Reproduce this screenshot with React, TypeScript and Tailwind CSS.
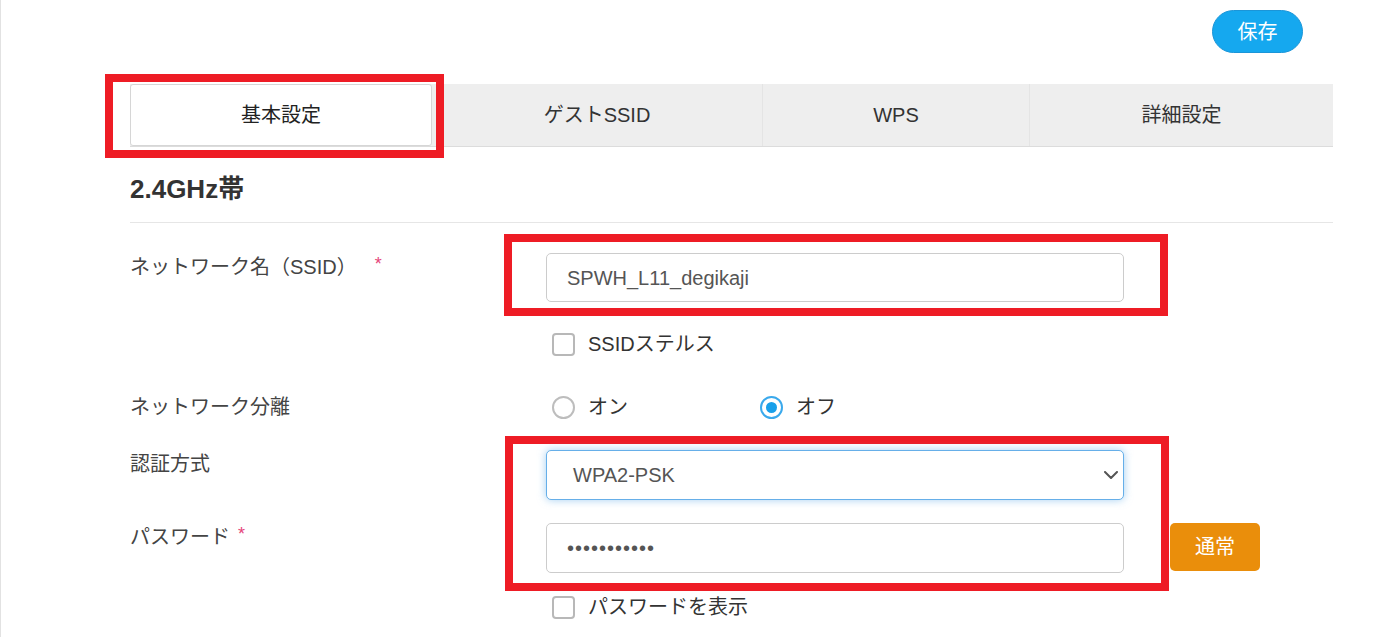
import React from "react";

const font = { fontFamily: '"Liberation Sans", "Noto Sans CJK JP", sans-serif' };

function RedBox({ className }: { className: string }) {
  return <span className={`pointer-events-none absolute border-[8px] border-[#ee1c25] ${className}`} />;
}

function Checkbox({ label }: { label: string }) {
  return (
    <label className="flex h-[24px] items-center pl-[6px]">
      <span className="h-[23px] w-[23px] rounded-[4px] border-2 border-[#b8b8b8] bg-white" />
      <span className="ml-[13px] text-[20px] leading-[24px] text-[#333]">{label}</span>
    </label>
  );
}

function Radio({ label, checked }: { label: string; checked?: boolean }) {
  return (
    <span className="flex w-[208px] items-center">
      <span
        className={`flex h-[23px] w-[23px] items-center justify-center rounded-full border-2 bg-white ${
          checked ? "border-[#3aa9ec]" : "border-[#bdbdbd]"
        }`}
      >
        {checked && <span className="h-[11px] w-[11px] rounded-full bg-[#19a0ea]" />}
      </span>
      <span className="ml-[13px] text-[20px] leading-[24px] text-[#333]">{label}</span>
    </span>
  );
}

function Req() {
  return <span className="relative -top-[4px] text-[18px] text-[#e5457a]">*</span>;
}

export default function App() {
  const tabs = [
    { name: "基本設定", w: "w-[302px]" },
    { name: "ゲストSSID", w: "w-[330px]" },
    { name: "WPS", w: "w-[267px]" },
    { name: "詳細設定", w: "w-[304px]" },
  ];
  return (
    <div style={font} className="h-[637px] w-full overflow-hidden border-l border-[#e2e2e2] bg-white">
      <div className="flex justify-end pr-[70px] pt-[10px]">
        <button className="h-[43px] w-[91px] rounded-full border border-[#1b95d8] bg-[#15a8ef] text-[20px] leading-none text-white">
          保存
        </button>
      </div>

      <div className="ml-[129px] mr-[40px] mt-[31px] flex h-[63px] border-b border-[#dcdcdc] bg-[#eeeeee]">
        {tabs.map((t, i) => (
          <div
            key={t.name}
            className={`relative flex ${t.w} items-center justify-center text-[20px] ${
              i === 0
                ? "rounded-[3px] border border-[#d6d6d6] bg-white text-[#222]"
                : "text-[#333]"
            } ${i === 2 || i === 3 ? "border-l border-[#e4e4e4]" : ""}`}
          >
            {t.name}
            {i === 0 && <RedBox className="-bottom-[13px] -left-[26px] -right-[13px] -top-[11px]" />}
          </div>
        ))}
      </div>

      <div className="ml-[129px] mr-[40px] border-b border-[#e6e6e6] pb-[18px] pt-[27px]">
        <h2 className="text-[26px] font-bold leading-[30px] text-[#333]">2.4GHz帯</h2>
      </div>

      <div className="ml-[129px] mr-[40px] mt-[30px]">
        {/* SSID */}
        <div className="flex">
          <div className="w-[416px] text-[20px] leading-[28px] text-[#444]">
            ネットワーク名（SSID）<span className="ml-[18px]"><Req /></span>
          </div>
          <div className="w-[578px]">
            <div className="relative">
              <div className="flex h-[49px] items-center rounded-[5px] border border-[#cccccc] bg-white px-[20px] text-[20px] text-[#555]">
                SPWH_L11_degikaji
              </div>
              <RedBox className="-bottom-[14px] -left-[42px] -right-[44px] -top-[19px]" />
            </div>
            <div className="mt-[30px]">
              <Checkbox label="SSIDステルス" />
            </div>
          </div>
        </div>

        {/* Network separation */}
        <div className="mt-[37px] flex items-center">
          <div className="w-[416px] text-[20px] leading-[28px] text-[#444]">ネットワーク分離</div>
          <div className="flex w-[578px] pl-[6px]">
            <Radio label="オン" />
            <Radio label="オフ" checked />
          </div>
        </div>

        <div className="relative mt-[29px]">
          <RedBox className="-bottom-[18px] -top-[14px] left-[375px] w-[664px]" />
          {/* Auth */}
          <div className="flex">
            <div className="w-[416px] text-[20px] leading-[28px] text-[#444]">認証方式</div>
            <div className="relative w-[578px]">
              <div className="flex h-[50px] items-center rounded-[5px] border border-[#66afe9] bg-white pl-[26px] text-[20px] text-[#555] shadow-[0_0_8px_rgba(102,175,233,0.6)]">
                WPA2-PSK
              </div>
              <svg
                className="absolute right-[6px] top-[21px]"
                width="14"
                height="8"
                viewBox="0 0 14 8"
                fill="none"
              >
                <path d="M1 1l6 6 6-6" stroke="#555" strokeWidth="2" strokeLinecap="round" strokeLinejoin="round" />
              </svg>
            </div>
          </div>

          {/* Password */}
          <div className="mt-[23px] flex">
            <div className="w-[416px] text-[20px] leading-[28px] text-[#444]">
              パスワード<span className="ml-[8px]"><Req /></span>
            </div>
            <div className="w-[578px]">
              <div className="flex h-[50px] items-center rounded-[5px] border border-[#cccccc] bg-white pl-[20px] text-[20px] tracking-[1px] text-[#555]">
                •••••••••••
              </div>
            </div>
            <button className="ml-[46px] h-[48px] w-[90px] rounded-[5px] bg-[#ea8e0b] text-[20px] text-white">
              通常
            </button>
          </div>
        </div>

        <div className="ml-[416px] mt-[22px]">
          <Checkbox label="パスワードを表示" />
        </div>
      </div>
    </div>
  );
}
